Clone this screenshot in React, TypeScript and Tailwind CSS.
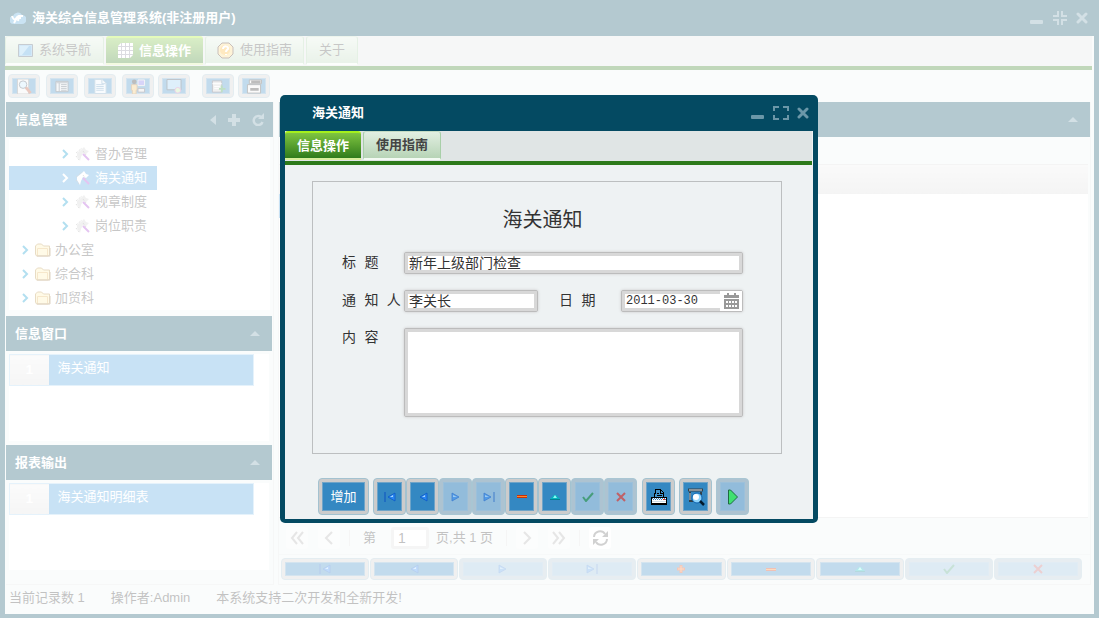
import { useState } from "react";
import type { ReactNode } from "react";
import clsx from "clsx";

type IconName =
  | "first" | "prev" | "next" | "last" | "plus" | "minus"
  | "edit" | "check" | "cross" | "print" | "preview" | "play";

const ActionIcon = ({ name }: { name: IconName }) => {
  switch (name) {
    case "first":
      return (
        <svg width="12" height="10" viewBox="0 0 12 10">
          <path d="M1 0v10" stroke="#0a52c0" />
          <path d="M11 1v8L4 5z" fill="#2a86f0" stroke="#0a58c8" strokeWidth=".8" />
          <path d="M9 3v2H6z" fill="#a5d5ff" />
        </svg>
      );
    case "prev":
      return (
        <svg width="10" height="10" viewBox="0 0 10 10">
          <path d="M9 1v8L2 5z" fill="#2a86f0" stroke="#0a58c8" strokeWidth=".8" />
          <path d="M7 3v2H4z" fill="#a5d5ff" />
        </svg>
      );
    case "next":
      return (
        <svg width="10" height="10" viewBox="0 0 10 10">
          <path d="M1 1v8l7-4z" fill="#2a86f0" stroke="#0a58c8" strokeWidth=".8" />
          <path d="M2 3v2h4z" fill="#a5d5ff" />
        </svg>
      );
    case "last":
      return (
        <svg width="12" height="10" viewBox="0 0 12 10">
          <path d="M11 0v10" stroke="#0a52c0" />
          <path d="M1 1v8l7-4z" fill="#2a86f0" stroke="#0a58c8" strokeWidth=".8" />
          <path d="M2 3v2h4z" fill="#a5d5ff" />
        </svg>
      );
    case "plus":
      return (
        <svg width="8" height="10" viewBox="0 0 8 10">
          <path d="M4 1v8M0 5h8" stroke="#d8481a" strokeWidth="3" />
          <path d="M4 2v6M1 5h6" stroke="#ff8a3a" />
        </svg>
      );
    case "minus":
      return (
        <svg width="10" height="3" viewBox="0 0 10 3">
          <path d="M0 0h10v3H0z" fill="#c8310a" />
          <path d="M0 1h10v1H0z" fill="#ff8a2a" />
        </svg>
      );
    case "edit":
      return (
        <svg width="10" height="6" viewBox="0 0 10 6">
          <path d="M0 6V5l4-4h2l4 4v1z" fill="#06b4bd" />
          <path d="M3 4l2-3 2 3z" fill="#8ef6f4" />
          <path d="M0 5.500h10" stroke="#047f92" />
        </svg>
      );
    case "check":
      return (
        <svg width="12" height="10" viewBox="0 0 12 10">
          <path d="M1 5l3 4 7-8" fill="none" stroke="#158a3c" strokeWidth="2" />
        </svg>
      );
    case "cross":
      return (
        <svg width="10" height="10" viewBox="0 0 10 10">
          <path d="M1 1l8 8M9 1L1 9" stroke="#e0251b" strokeWidth="2" />
        </svg>
      );
    case "print":
      return (
        <svg width="18" height="16" viewBox="0 0 18 16" shapeRendering="crispEdges">
          <path d="M4.500 8V4.500h1V.5h5l3 3V8" fill="#3f92cc" stroke="#000" />
          <path d="M10.500 1v3h3M7 4.500h2M7 6.500h5" fill="none" stroke="#000" />
          <path d="M1.500 8.500h15v6h-15z" fill="#fff" stroke="#000" />
          <path d="M2 9.500h14M3 10.500h13" stroke="#3c7fb4" strokeDasharray="1 1" />
          <path d="M2 12.500h14" stroke="#cfdde6" />
          <path d="M13 10.500h2" stroke="#f03020" />
          <path d="M1 15h16" stroke="#000" strokeWidth="2" />
        </svg>
      );
    case "preview":
      return (
        <svg width="18" height="18" viewBox="0 0 18 18">
          <path d="M1 2h15" stroke="#32414a" strokeWidth="3" />
          <path d="M2 2h13" stroke="#e4e4e4" />
          <path d="M3 4v9h4M14 4v3" fill="none" stroke="#32414a" strokeWidth="2" />
          <path d="M3 5v7" stroke="#c9d5dc" />
          <circle cx="10" cy="10" r="5" fill="#8ed4fb" stroke="#0d63b0" />
          <circle cx="9" cy="9" r="3" fill="#fff" />
          <path d="M13 13l4 4" stroke="#031a2c" strokeWidth="2.500" />
        </svg>
      );
    case "play":
      return (
        <svg width="12" height="16" viewBox="0 0 12 16">
          <path d="M1.500 1v14h2l7-7-7-7z" fill="#3fe070" stroke="#1d6b42" />
        </svg>
      );
  }
};

interface ActionButtonProps {
  label: string;
  className?: string;
  disabled?: boolean;
  dimIcon?: boolean;
  children: ReactNode;
}

const ActionButton = ({ label, className, disabled, dimIcon = disabled, children }: ActionButtonProps) => (
  <button
    type="button"
    aria-label={label}
    disabled={disabled}
    className={clsx(
      "flex rounded-[4px] border p-[3px]",
      disabled ? "border-[#a9c6d3] bg-[#adc3d1]" : "border-[#a3c2d0] bg-[#cccccc]",
      className
    )}
  >
    <span
      className={clsx(
        "flex flex-1 items-center justify-center self-stretch border",
        disabled ? "border-[#9cc0da] bg-[#92bcdb]" : "border-[#6fa4c8] bg-[#3488c2]"
      )}
    >
      <span className={clsx("flex", dimIcon && "opacity-60")}>{children}</span>
    </span>
  </button>
);

const recordActions: { name: IconName; label: string; disabled?: boolean }[] = [
  { name: "first", label: "首记录" },
  { name: "prev", label: "上一条" },
  { name: "next", label: "下一条", disabled: true },
  { name: "last", label: "末记录", disabled: true },
  { name: "plus", label: "新增" },
  { name: "minus", label: "删除" },
  { name: "edit", label: "编辑" },
  { name: "check", label: "保存", disabled: true },
  { name: "cross", label: "取消", disabled: true },
];

const WindowButtons = ({ restored }: { restored?: boolean }) => (
  <div className="flex items-center gap-2 text-[#6b97a8]">
    <button type="button" aria-label="最小化">
      <svg width="14" height="14" viewBox="0 0 14 14">
        <rect y="9" width="13" height="4" rx="1" fill="currentColor" />
      </svg>
    </button>
    <button type="button" aria-label="最大化">
      <svg width="16" height="14" viewBox="0 0 16 14" fill="none" stroke="currentColor" strokeWidth="2">
        {restored ? (
          <path d="M1 9h5v5M10 14V9h5M15 5h-5V0M6 0v5H1" />
        ) : (
          <path d="M1 5V1h5M10 1h5v4M15 9v4h-5M6 13H1V9" />
        )}
      </svg>
    </button>
    <button type="button" aria-label="关闭">
      <svg width="12" height="12" viewBox="0 0 12 12">
        <path d="M2 2l8 8M10 2l-8 8" stroke="currentColor" strokeWidth="3" strokeLinecap="round" />
      </svg>
    </button>
  </div>
);

interface TabProps {
  active?: boolean;
  icon?: ReactNode;
  className?: string;
  onClick?: () => void;
  children: ReactNode;
}

const Tab = ({ active, icon, className, onClick, children }: TabProps) => (
  <button
    type="button"
    role="tab"
    aria-selected={!!active}
    onClick={onClick}
    className={clsx(
      "flex items-center gap-[6px] rounded-t-[3px] border-b-2 bg-linear-to-b",
      active
        ? "border-t-2 border-t-[#a5f01c] border-b-[#d8ee9c] from-[#7fc540] to-[#2f7c1c] font-bold text-white"
        : "border-x border-t border-x-[#a8cfa8] border-t-[#c4dcc4] border-b-[#f3faf3] from-[#e2efe2] to-[#b7d4b6] text-[#444]",
      className
    )}
  >
    {icon}
    {children}
  </button>
);

const UpArrow = () => (
  <svg width="10" height="5" viewBox="0 0 10 5" className="mr-[3px]">
    <path d="M0 5l5-5 5 5z" fill="currentColor" />
  </svg>
);

const PanelHeader = ({ title, children }: { title?: string; children: ReactNode }) => (
  <div className="flex h-[35px] items-center bg-[#044a62] pr-[9px] pl-[9px] font-bold text-white">
    {title && <h2>{title}</h2>}
    <div className="ml-auto flex items-center gap-3 text-[#6b97a8]">{children}</div>
  </div>
);

const MonitorIcon = () => (
  <svg width="15" height="13" viewBox="0 0 15 13">
    <path d="M.5.5h14v12H.5z" fill="#6fb6e6" stroke="#456" />
    <path d="M2 2h11v9H2z" fill="#3d9ade" />
    <path d="M2 2h9L4 11H2z" fill="#91cdf2" />
  </svg>
);

const GridIcon = () => (
  <svg width="15" height="15" viewBox="0 0 15 15">
    <path d="M3 0h12v12l-3 3H0V3z" fill="#fff" />
    <path d="M0 3.500h15M0 7.500h15M0 11.500h15M3.500 0v15M7.500 0v15M11.500 0v15" stroke="#8a8a9a" />
  </svg>
);

const HelpIcon = () => (
  <svg width="17" height="17" viewBox="0 0 17 17">
    <path d="M5 1h7l4 4v7l-4 4H5l-4-4V5z" fill="#fbd57a" stroke="#4b2c1c" />
    <circle cx="8" cy="8" r="5" fill="#ffb52d" />
    <path d="M6 7c0-4 6-3 5 0-1 1-2 1-2 3M9 12v1" fill="none" stroke="#fff" strokeWidth="2" />
  </svg>
);

const toolbarIcons: { label: string; gap: string; drawing: ReactNode }[] = [
  {
    label: "查询",
    gap: "mr-[6px]",
    drawing: (
      <>
        <path d="M1 0h12v16H1z" fill="#eee" stroke="#777" />
        <circle cx="7" cy="6" r="4" fill="#c4e8fa" stroke="#345" />
        <path d="M10 9l5 6" stroke="#b5482a" strokeWidth="3" />
      </>
    ),
  },
  {
    label: "列表",
    gap: "mr-[6px]",
    drawing: (
      <>
        <path d="M1.500 2.500h13v11h-13z" fill="#dde4ea" stroke="#345" />
        <path d="M2 4h12M5 4v9M7 6h6M7 8h6M7 10h6M7 12h6" stroke="#456" />
      </>
    ),
  },
  {
    label: "文档",
    gap: "mr-[6px]",
    drawing: (
      <>
        <path d="M2.500.5h8l4 4v11h-12z" fill="#e6f2fb" stroke="#6a96b6" />
        <path d="M10 1v4h4M4 6h8M4 8h8M4 10h8M4 12h8" fill="none" stroke="#5a90ba" />
      </>
    ),
  },
  {
    label: "用户",
    gap: "mr-1",
    drawing: (
      <>
        <circle cx="4" cy="3" r="2.500" fill="#222" />
        <path d="M1 6h6v6H6v4H2v-4H1z" fill="#f2c063" stroke="#a5702a" />
        <path d="M8 1h7v6H8z" fill="#7a6ee8" stroke="#ddd" />
        <path d="M8 10h7v4H8z" fill="#ddd" stroke="#445" />
      </>
    ),
  },
  {
    label: "窗口",
    gap: "mr-3",
    drawing: (
      <>
        <path d="M.5.5h15v11H.5z" fill="#8fcaf0" stroke="#234" />
        <circle cx="12" cy="12" r="3" fill="#b9e8a0" stroke="#c060b0" />
      </>
    ),
  },
  {
    label: "导出",
    gap: "mr-1",
    drawing: (
      <>
        <path d="M2 2h10v12H2z" fill="#ccc" stroke="#445" />
        <path d="M2 5h10M4 8h6M4 10h6" stroke="#fff" />
        <path d="M12 7v7M9 10.500h7" stroke="#2a983a" strokeWidth="2" />
      </>
    ),
  },
  {
    label: "打印",
    gap: "",
    drawing: (
      <>
        <path d="M3 1h13v4H3zM1 6h14v9H1z" fill="#eee" stroke="#333" />
        <path d="M5 3h10M4 11h9" stroke="#222" strokeWidth="3" />
      </>
    ),
  },
];

const treeItems = [
  { label: "督办管理", leaf: true },
  { label: "海关通知", leaf: true, selected: true },
  { label: "规章制度", leaf: true },
  { label: "岗位职责", leaf: true },
  { label: "办公室" },
  { label: "综合科" },
  { label: "加贸科" },
];

const LeafIcon = ({ selected }: { selected?: boolean }) => (
  <svg width="16" height="14" viewBox="0 0 16 14">
    <path d="M2 6l5-4 2-2 2 3 3 1-3 3-3-1-2 4-1 4-3-5z" fill={selected ? "#fff" : "#cfcfcf"} />
    <path d="M1 6l6-5M1 9l3 4M8 4l3 4" stroke="#888" strokeDasharray="1 1" />
    <path d="M8 7l6 6" stroke="#a43bd0" strokeWidth="2" />
  </svg>
);

const FolderIcon = () => (
  <svg width="16" height="14" viewBox="0 0 16 14">
    <path d="M.5 11V3l2-2h4l2 2h6v9l-1 1h-12z" fill="#fdeeb0" stroke="#b3893a" />
    <path d="M2.500 13V5.500h10V13" fill="none" stroke="#e0b050" />
    <path d="M2 13h13V5" fill="none" stroke="#906a35" />
  </svg>
);

const OutputList = ({ label }: { label: string }) => (
  <div className="mx-[3px] mt-[3px] mb-1 h-[87px] bg-white">
    <table className="w-[245px] border-collapse text-white">
      <tbody>
        <tr className="h-[31px] border border-[#a9d3f2]">
          <td className="w-[39px] bg-linear-to-b from-[#f2f2f2] to-[#dedede] text-center font-bold">1</td>
          <td className="bg-[#489ede] px-[9px] pb-1">{label}</td>
        </tr>
      </tbody>
    </table>
  </div>
);

const SidePanel = () => (
  <aside className="w-[268px] shrink-0 border-r border-b border-[#dfe4e4]">
    <PanelHeader title="信息管理">
      <button type="button" aria-label="收起">
        <svg width="7" height="12" viewBox="0 0 7 12">
          <path d="M7 1v10L1 6z" fill="currentColor" />
        </svg>
      </button>
      <button type="button" aria-label="添加">
        <svg width="12" height="12" viewBox="0 0 12 12">
          <path d="M6 0v12M0 6h12" stroke="currentColor" strokeWidth="4" />
        </svg>
      </button>
      <button type="button" aria-label="刷新">
        <svg width="12" height="13" viewBox="0 0 12 13">
          <path d="M9 4a4.500 4.500 0 1 0 1.500 5" fill="none" stroke="currentColor" strokeWidth="2.500" />
          <path d="M12 0v6H6z" fill="currentColor" />
        </svg>
      </button>
    </PanelHeader>
    <ul className="mx-[3px] mt-[2px] bg-white pt-[3px]">
      {treeItems.map((item) => (
        <li
          key={item.label}
          className={clsx(
            "flex h-6 w-fit items-center pr-[10px]",
            item.leaf ? "pl-[52px]" : "pl-3",
            item.selected ? "bg-[#489ede] text-white" : "text-[#444]"
          )}
        >
          <svg width="8" height="10" viewBox="0 0 8 10" className={item.selected ? "text-white" : "text-[#0095cd]"}>
            <path d="M2 1l4 4-4 4" fill="none" stroke="currentColor" strokeWidth="2" />
          </svg>
          <span className="mr-1 ml-[6px]">{item.leaf ? <LeafIcon selected={item.selected} /> : <FolderIcon />}</span>
          {item.label}
        </li>
      ))}
    </ul>
    <section className="mt-[6px] mr-px">
      <PanelHeader title="信息窗口">
        <UpArrow />
      </PanelHeader>
      <OutputList label="海关通知" />
    </section>
    <section className="mr-px pb-[10px]">
      <PanelHeader title="报表输出">
        <UpArrow />
      </PanelHeader>
      <OutputList label="海关通知明细表" />
    </section>
  </aside>
);

const PageButton = ({ label, path }: { label: string; path: string }) => (
  <button
    type="button"
    aria-label={label}
    className="flex size-[22px] items-center justify-center rounded-[3px] bg-[#f6f7f7] text-[#aaa]"
  >
    <svg width="14" height="14" viewBox="0 0 14 14">
      <path d={path} fill="none" stroke="currentColor" strokeWidth="2" />
    </svg>
  </button>
);

const Divider = () => <span className="mx-[9px] h-4 w-px bg-[#ddd]" />;

const MainPanel = () => (
  <main className="flex min-w-0 flex-1 flex-col border-x border-b border-[#dfe4e4]">
    <PanelHeader>
      <UpArrow />
    </PanelHeader>
    <div className="h-[27px]" />
    <div className="mr-[2px] flex-1 border-y border-[#dadada] bg-white">
      <table className="w-full">
        <thead>
          <tr className="h-[29px] bg-linear-to-b from-[#eeeeee] to-[#dbdbdb]">
            <th />
            <th />
          </tr>
        </thead>
        <tbody>
          <tr className="h-6">
            <td className="w-[60px] bg-[#489ede]" />
            <td />
          </tr>
        </tbody>
      </table>
    </div>
    <div className="flex h-[37px] items-center border-b border-[#e5eaea] pt-[3px] pl-[7px] text-[#333]">
      <PageButton label="首页" path="M7 1L2 7l5 6M13 1L8 7l5 6" />
      <span className="w-[10px]" />
      <PageButton label="上一页" path="M10 1L4 7l6 6" />
      <Divider />
      <label htmlFor="page" className="ml-1">第</label>
      <input
        id="page"
        defaultValue="1"
        className="mr-[7px] ml-[15px] h-[22px] w-[38px] rounded-[3px] border-3 border-[#dcdcdc] bg-white px-1 text-[14px]"
      />
      <span className="mr-1">页,共 1 页</span>
      <Divider />
      <PageButton label="下一页" path="M4 1l6 6-6 6" />
      <span className="w-[10px]" />
      <PageButton label="末页" path="M1 1l5 6-5 6M7 1l5 6-5 6" />
      <Divider />
      <button type="button" aria-label="重新载入" className="flex size-[22px] items-center justify-center rounded-[3px] bg-white text-[#666]">
        <svg width="17" height="16" viewBox="0 0 17 16">
          <path d="M2 7a6 6 0 0 1 11-3M15 9a6 6 0 0 1-11 3" fill="none" stroke="currentColor" strokeWidth="2" />
          <path d="M16 1v6h-6zM1 15V9h6z" fill="currentColor" />
        </svg>
      </button>
    </div>
    <div className="mr-2 ml-[2px] grid grid-cols-9 gap-px pt-[3px] pb-1">
      {recordActions.map((action) => (
        <ActionButton key={action.name} label={action.label} disabled={action.disabled} className="h-[22px]">
          <ActionIcon name={action.name} />
        </ActionButton>
      ))}
    </div>
  </main>
);

const AppWindow = () => (
  <div className="flex min-h-screen flex-col border-x-[5px] border-b-4 border-[#044a62] bg-[#eef3f3]">
    <header className="flex h-9 items-center justify-between bg-[#044a62] pr-[6px] pl-[5px] font-bold text-white">
      <h1 className="flex items-center gap-[6px]">
        <svg width="16" height="13" viewBox="0 0 16 13">
          <path d="M4 12a4 4 0 0 1-1-8 5 5 0 0 1 9-1 4 4 0 0 1 0 9z" fill="#4fa2d8" />
          <path d="M2 4c2 5 3 4 6 0L4 11M8 9l1-5h4M9 6h2" fill="none" stroke="#fff" strokeWidth="2" />
        </svg>
        海关综合信息管理系统(非注册用户)
      </h1>
      <WindowButtons restored />
    </header>
    <nav role="tablist" className="mr-[2px] flex h-[34px] gap-[2px] border-b-4 border-[#2c7a1a] bg-[#dfe4e4] pb-px">
      <Tab className="px-3" icon={<MonitorIcon />}>系统导航</Tab>
      <Tab className="px-3" icon={<GridIcon />} active>信息操作</Tab>
      <Tab className="px-[11px]" icon={<HelpIcon />}>使用指南</Tab>
      <Tab className="px-3">关于</Tab>
    </nav>
    <div className="flex h-8 items-center pl-[3px]">
      {toolbarIcons.map((tool) => (
        <ActionButton key={tool.label} label={tool.label} className={clsx("h-6 w-8", tool.gap)}>
          <svg width="16" height="15" viewBox="0 0 16 16">
            {tool.drawing}
          </svg>
        </ActionButton>
      ))}
    </div>
    <div className="mr-[3px] ml-px flex flex-1 gap-1">
      <SidePanel />
      <MainPanel />
    </div>
    <footer className="flex h-[29px] items-center gap-[26px] pb-1 pl-1 text-[#333]">
      <span>当前记录数 1</span>
      <span>操作者:Admin</span>
      <span>本系统支持二次开发和全新开发!</span>
    </footer>
  </div>
);

const fieldClass =
  "border border-[#bcbcbc] bg-white text-[#333] shadow-[inset_0_0_0_3px_#d8d8d8,0_0_3px_#c8c8c8] rounded-[2px] outline-none";

const labelClass = "shrink-0 font-['Liberation_Mono','Noto_Sans_CJK_SC',monospace] text-[14px]";

const NoticeDialog = () => {
  const [tab, setTab] = useState("信息操作");
  const [notice, setNotice] = useState({
    title: "新年上级部门检查",
    sender: "李关长",
    date: "2011-03-30",
    content: "",
  });

  return (
    <div role="dialog" aria-label="海关通知" className="w-full max-w-[538px] rounded-[5px] border-x-[5px] border-b-4 border-[#044a62] bg-[#eef2f3]">
      <div className="flex h-9 items-center justify-between bg-[#044a62] pr-1 pl-[27px] font-bold text-white">
        <h2>海关通知</h2>
        <WindowButtons />
      </div>
      <div role="tablist" className="mr-px flex h-[34px] gap-[2px] border-b-4 border-[#2c7a1a] bg-[#e0e5e5] pb-px">
        {["信息操作", "使用指南"].map((name) => (
          <Tab key={name} active={tab === name} onClick={() => setTab(name)} className="px-3 font-bold">
            {name}
          </Tab>
        ))}
      </div>
      <form className="mt-4 mr-[31px] ml-[27px] flex flex-col gap-4 border border-[#bcbfc0] pt-[22px] pr-[38px] pb-9 pl-[29px] text-[#333]">
        <h3 className="text-center text-[20px] leading-8">海关通知</h3>
        <div className="flex h-[22px] items-center">
          <label htmlFor="title" className={clsx(labelClass, "w-[62px]")}>标 题</label>
          <input
            id="title"
            value={notice.title}
            onChange={(e) => setNotice({ ...notice, title: e.target.value })}
            className={clsx(fieldClass, "h-[22px] min-w-0 flex-1 px-1 pb-[2px] text-[14px]")}
          />
        </div>
        <div className="flex h-[22px] items-center">
          <label htmlFor="sender" className={clsx(labelClass, "w-[62px]")}>通 知 人</label>
          <input
            id="sender"
            value={notice.sender}
            onChange={(e) => setNotice({ ...notice, sender: e.target.value })}
            className={clsx(fieldClass, "h-[22px] w-[134px] px-1 pb-[2px] text-[14px]")}
          />
          <label htmlFor="date" className={clsx(labelClass, "ml-[21px] w-[62px]")}>日 期</label>
          <div className={clsx(fieldClass, "flex h-[22px] min-w-0 flex-1")}>
            <input
              id="date"
              value={notice.date}
              onChange={(e) => setNotice({ ...notice, date: e.target.value })}
              className="min-w-0 flex-1 bg-transparent pl-1 font-['Liberation_Mono',monospace] text-[12px] outline-none"
            />
            <button type="button" aria-label="选择日期" className="flex w-[22px] items-center justify-center bg-white">
              <svg width="15" height="16" viewBox="0 0 15 16">
                <path d="M0 2h15v3H0zM3 0h2v3H3zM10 0h2v3h-2zM0 6h15v10H0z" fill="#999" />
                <path d="M2 8h2v2H2zM5 8h2v2H5zM8 8h2v2H8zM11 8h2v2h-2zM2 12h2v2H2zM5 12h2v2H5zM8 12h2v2H8zM11 12h2v2h-2z" fill="#fff" />
              </svg>
            </button>
          </div>
        </div>
        <div className="flex items-start">
          <label htmlFor="content" className={clsx(labelClass, "w-[62px]")}>内 容</label>
          <textarea
            id="content"
            value={notice.content}
            onChange={(e) => setNotice({ ...notice, content: e.target.value })}
            className={clsx(fieldClass, "h-[89px] min-w-0 flex-1 resize-none p-1 text-[14px]")}
          />
        </div>
      </form>
      <div className="mt-6 flex gap-1 pb-1 pl-[33px]">
        <ActionButton label="增加" className="h-[37px] w-[51px] text-white">增加</ActionButton>
        <div className="flex">
          {recordActions
            .filter((action) => action.name !== "plus")
            .map((action) => (
              <ActionButton key={action.name} label={action.label} disabled={action.disabled} className="h-[37px] w-[33px]">
                <ActionIcon name={action.name} />
              </ActionButton>
            ))}
        </div>
        <div className="ml-px flex gap-1">
          <ActionButton label="打印" className="h-[37px] w-[33px]">
            <ActionIcon name="print" />
          </ActionButton>
          <ActionButton label="预览" className="h-[37px] w-[33px]">
            <ActionIcon name="preview" />
          </ActionButton>
          <ActionButton label="执行" className="h-[37px] w-[33px]" disabled dimIcon={false}>
            <ActionIcon name="play" />
          </ActionButton>
        </div>
      </div>
    </div>
  );
};

const App = () => (
  <div className="relative font-['Liberation_Sans','Noto_Sans_CJK_SC',sans-serif] text-[13px] leading-5">
    <AppWindow />
    <div className="absolute inset-0 flex items-center justify-center bg-white/70 pr-px">
      <NoticeDialog />
    </div>
  </div>
);

export default App;
